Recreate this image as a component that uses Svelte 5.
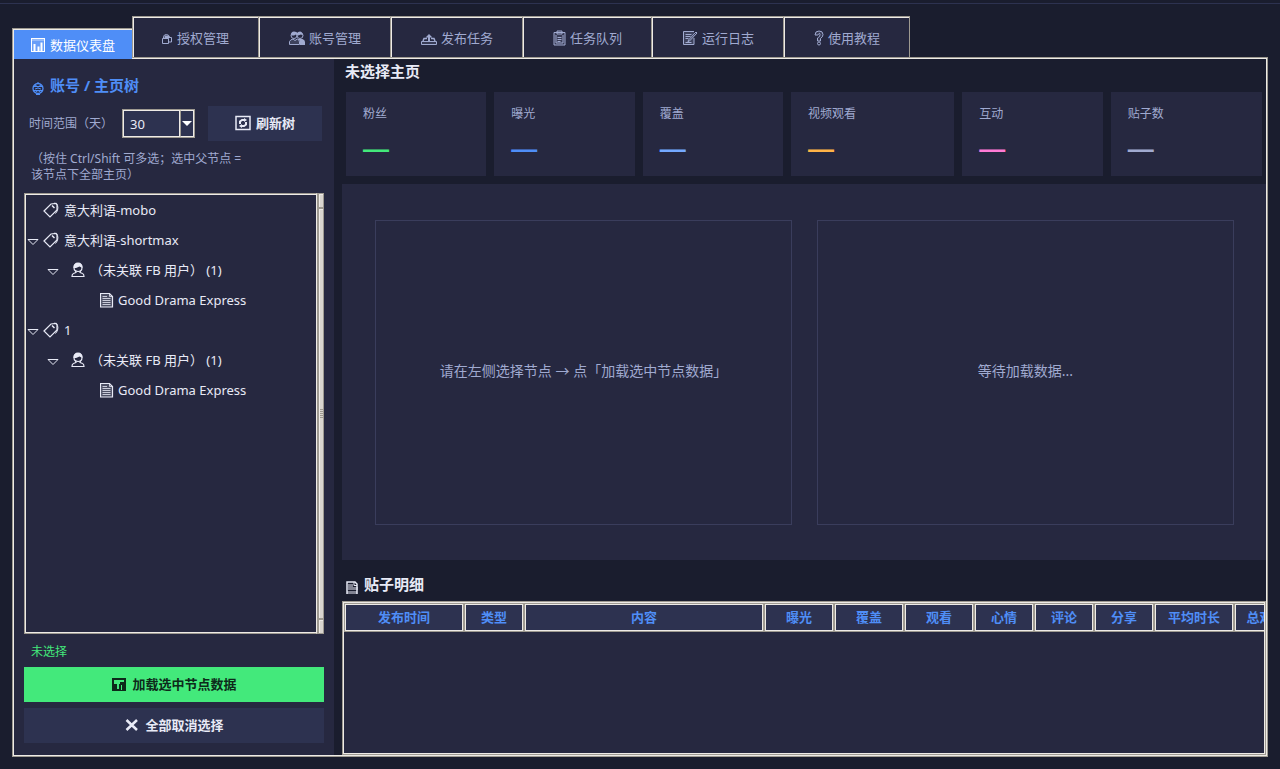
<script>
	const tabs = [
		{ label: "数据仪表盘", icon: "chart", width: 16 },
		{ label: "授权管理", icon: "lock", width: 11 },
		{ label: "账号管理", icon: "users", width: 16 },
		{ label: "发布任务", icon: "outbox", width: 16 },
		{ label: "任务队列", icon: "clipboard", width: 13 },
		{ label: "运行日志", icon: "memo", width: 16 },
		{ label: "使用教程", icon: "question", width: 10 },
	];

	const stats = [
		{ label: "粉丝", color: "green" },
		{ label: "曝光", color: "blue" },
		{ label: "覆盖", color: "sky" },
		{ label: "视频观看", color: "orange", size: "large" },
		{ label: "互动", color: "pink" },
		{ label: "贴子数", color: "grey", size: "medium" },
	];

	const nodes = [
		{ kind: "tag", label: "意大利语-mobo", leaf: true },
		{ kind: "tag", label: "意大利语-shortmax" },
		{ kind: "user", label: "（未关联 FB 用户） (1)" },
		{ kind: "page", label: "Good Drama Express", leaf: true },
		{ kind: "tag", label: "1" },
		{ kind: "user", label: "（未关联 FB 用户） (1)" },
		{ kind: "page", label: "Good Drama Express", leaf: true },
	];

	const columns = [
		{ label: "发布时间", width: 120 },
		{ label: "类型", width: 60 },
		{ label: "内容", width: 240 },
		{ label: "曝光", width: 70 },
		{ label: "覆盖", width: 70 },
		{ label: "观看", width: 70 },
		{ label: "心情", width: 60 },
		{ label: "评论", width: 60 },
		{ label: "分享", width: 60 },
		{ label: "平均时长", width: 80 },
		{ label: "总观看时长", width: 90 },
	];

	let activeTab = $state(0);
	let days = $state("30");
</script>

{#snippet icon(name, width = 16)}
	<svg class="icon" {width} height="16" viewBox="0 0 {width} 16" fill="none" stroke="currentColor" aria-hidden="true">
		{#if name === "chart"}
			<rect x="1.500" y="1.500" width="13" height="13" fill="currentColor" fill-opacity=".15" />
			<path d="M1 3h14" opacity=".6" />
			<path d="M4.500 7v7M8.500 9.500v4.500M11.500 5.500v8.500" stroke-width="2" />
		{:else if name === "chart-solid"}
			<path d="M1 2h14v13H1z" fill="currentColor" stroke="none" />
			<path class="cut" d="M3 4h10v2H9v2H8v5H6V8H3zM10 9h1v5h-1z" stroke="none" />
		{:else if name === "lock"}
			<path d="M.5 8.500h6v5h-6zM7 7.500h2.500v4.500H7" />
			<path d="M1.500 8V6.500Q2 4.500 4.500 4.500T7.500 7.500" />
			<path d="M3 6h4v2H3z" fill="currentColor" />
		{:else if name === "users"}
			<circle cx="5" cy="5.500" r="3" />
			<circle cx="11" cy="5.500" r="3" />
			<path d="M2 5.500q0-4 3-4t3 1.500q1-1.500 3-1.500t3 4l-2-1-3 1-2-1-2 1z" fill="currentColor" stroke="none" />
			<path d="M.5 14.500v-3q1-2 3.500-2.500l2 1.500L8.500 9q2 1 2 3v2.500z" fill="currentColor" fill-opacity=".2" />
			<path d="M8.500 9h5q2.500 1 2.500 3v3h-5v-4z" fill="currentColor" stroke="none" />
		{:else if name === "outbox"}
			<path d="M.5 11.500h15v3H.5z" fill="currentColor" fill-opacity=".15" />
			<path d="M2 11l1-2.500h3M14 11l-1-2.500h-3" stroke-width="1.500" />
			<path d="M7 12V7.500H4.500L8 4l3.500 3.500H9V12z" fill="currentColor" stroke="none" />
		{:else if name === "clipboard"}
			<path d="M1 2.500h11v12.500H1zM4 1h5v3H4z" fill="currentColor" fill-opacity=".15" />
			<path d="M3 5v8h7V5M4.500 7.500h4M4.500 9.500h4M4.500 11.500h3" />
		{:else if name === "memo"}
			<path d="M12 8v6.500H1.500v-13H12" fill="currentColor" fill-opacity=".2" />
			<path d="M3.500 4.500h6M3.500 6.500h5M3.500 8.500h3M3.500 12.500h6" />
			<path d="M15 3 7.500 11 6 12l.5-2L14 2z" />
		{:else if name === "question"}
			<path d="M1 5q0-4 4-4t4 3.500Q9 7 6.500 8.500V11h-3V8Q6.500 6.500 6 4.500T5 3.500 4 5z" fill="currentColor" fill-opacity=".15" />
			<circle cx="5" cy="13.500" r="1.500" />
		{:else if name === "globe"}
			<circle cx="7" cy="8.500" r="5" stroke-width="1.300" />
			<path d="M2 6.500h9M2.500 10.500h9M4 5l3 2 3-2M4 9l3-1 3 1M4.500 12 7 10.500 9.500 12" />
			<path d="M5 14.500h4M6 3h2" />
		{:else if name === "refresh"}
			<rect x="1" y="1.500" width="14" height="13" stroke-width="1.500" />
			<path d="M5 9V6.500L7 5h2M11 7v2.500L9 11H7" stroke-width="2" />
			<path d="M9 3v4l3-2zM7 13V9l-3 2z" fill="currentColor" stroke="none" />
		{:else if name === "tag"}
			<path d="M1 9 8 2l5-.5 1 1v5.500L7 15z" stroke-width="1.200" />
			<path d="M11.500 1q4.500 1 3 7.500l-2 3" />
			<path d="M9 3.500 11.500 6" stroke-width="1.500" />
		{:else if name === "user"}
			<path d="M3 5.500Q3 1.500 7 1.500t4 4Q11 9.500 7 9.500T3 5.500z" stroke-width="1.200" />
			<path d="M2.500 6q0-5.500 4.500-5.500t4.500 5.500L8.500 4.500 5 6z" fill="currentColor" stroke="none" />
			<path d="M4.500 9 5 10.500 2.500 11.500Q1 12 1 14.500h12q0-2.500-1.500-3L9 10.500 9.500 9" stroke-width="1.200" />
		{:else if name === "page"}
			<path d="M.5 1.500h9l3 3v10.500H.5z" fill="currentColor" fill-opacity=".2" stroke-width="1.200" />
			<path d="M9.500 1.500v3h3M2.500 4.500H7M2.500 6.500h8M2.500 8.500h8M2.500 10.500h8M2.500 12.500h8" opacity=".8" />
		{:else if name === "file"}
			<path d="M2 15V3h8l2 2v10" stroke-width="1.500" />
			<path d="M9 3v3.500h3" />
			<path d="M3 5h5v3h5v3H3zM2 12h10v3H2z" fill="currentColor" stroke="none" opacity=".5" />
		{:else if name === "close"}
			<path d="m2.500 3 10.500 10M13 3 2.500 13" stroke-width="2.500" />
		{/if}
	</svg>
{/snippet}

<div class="app">
	<div class="tabs" role="tablist">
		{#each tabs as tab, i}
			<button
				class="tab"
				class:active={i === activeTab}
				role="tab"
				aria-selected={i === activeTab}
				onclick={() => (activeTab = i)}
			>
				{@render icon(tab.icon, tab.width)}
				<span>{tab.label}</span>
			</button>
		{/each}
	</div>

	<main class="pane">
		<aside class="sidebar">
			<h2 class="side-title">{@render icon("globe", 14)}账号 / 主页树</h2>

			<div class="filter">
				<label for="days">时间范围（天）</label>
				<div class="combo">
					<select id="days" bind:value={days}>
						<option>7</option>
						<option>14</option>
						<option>30</option>
						<option>90</option>
					</select>
					<span class="arrow"></span>
				</div>
				<button class="btn refresh">{@render icon("refresh")}刷新树</button>
			</div>

			<p class="hint">（按住 Ctrl/Shift 可多选；选中父节点 =<br />该节点下全部主页）</p>

			<div class="tree-box">
				<ul class="tree">
					{#each nodes as node}
						<li class={node.kind}>
							<svg class="toggle" width="12" height="8" viewBox="0 0 12 8" fill="none" stroke="currentColor" aria-hidden="true">
								{#if !node.leaf}
									<path d="M1 1.500h10L6 6.500z" />
								{/if}
							</svg>
							{@render icon(node.kind, node.kind === "tag" ? 16 : 14)}
							<span>{node.label}</span>
						</li>
					{/each}
				</ul>
				<div class="scrollbar">
					<span class="cap"></span>
					<span class="thumb"><i></i></span>
					<span class="cap"></span>
				</div>
			</div>

			<p class="status">未选择</p>
			<button class="btn primary">{@render icon("chart-solid")}加载选中节点数据</button>
			<button class="btn">{@render icon("close")}全部取消选择</button>
		</aside>

		<section class="content">
			<h1>未选择主页</h1>

			<div class="stats">
				{#each stats as stat}
					<div class="card {stat.size ?? ''}">
						<span class="name">{stat.label}</span>
						<span class="value {stat.color}">—</span>
					</div>
				{/each}
			</div>

			<div class="charts">
				<div class="chart">请在左侧选择节点 → 点「加载选中节点数据」</div>
				<div class="chart">等待加载数据...</div>
			</div>

			<h2 class="posts-title">{@render icon("file", 14)}贴子明细</h2>

			<div class="table-box">
				<table>
					<colgroup>
						{#each columns as column}
							<col style="width: {column.width}px" />
						{/each}
					</colgroup>
					<thead>
						<tr>
							{#each columns as column}
								<th scope="col">{column.label}</th>
							{/each}
						</tr>
					</thead>
					<tbody></tbody>
				</table>
			</div>
		</section>
	</main>
</div>

<style>
	:global(body) {
		background: #1a1d2e;
	}

	.app {
		--dark: #1a1d2e;
		--panel: #262840;
		--raised: #2d3250;
		--muted: #a0aad0;
		--text: #e8eaf6;
		--blue: #4f8ef7;
		--green: #43e97b;
		--edge: #9e9a91;
		--light: #eeebe7;
		box-sizing: border-box;
		display: flex;
		flex-direction: column;
		min-height: 100vh;
		padding: 12px;
		padding-top: 16px;
		background: linear-gradient(var(--raised), var(--raised)) 0 3px / 100% 1px no-repeat var(--dark);
		color: var(--text);
		font-family: "Noto Sans", "Noto Sans CJK SC", sans-serif;
		font-size: 13px;
		line-height: 20px;
	}

	.app *,
	.app *::after {
		box-sizing: border-box;
	}

	h1,
	h2,
	p,
	ul {
		margin: 0;
		padding: 0;
	}

	button,
	select {
		font: inherit;
		color: inherit;
		border: 0;
		border-radius: 0;
	}

	.icon {
		flex: none;
	}

	.tabs {
		display: flex;
		align-items: flex-end;
		position: relative;
	}

	.tab {
		display: flex;
		align-items: center;
		gap: 4px;
		height: 41px;
		padding: 2px 29px 0;
		border: solid var(--edge);
		border-width: 1px 1px 0;
		box-shadow: inset 1px 1px var(--light);
		background: var(--panel);
		color: var(--muted);
		white-space: nowrap;
	}

	.tab.active {
		height: 31px;
		margin-bottom: -2px;
		padding: 2px 17px 0;
		border-right: 0;
		background: var(--blue);
		color: #fff;
	}

	.tab + .tab + .tab {
		border-left-width: 0;
		padding-left: 30px;
	}

	.pane {
		flex: 1;
		display: flex;
		min-width: 0;
		border: 1px solid var(--edge);
		outline: 1px solid var(--light);
		outline-offset: -2px;
		padding: 1px;
	}

	.sidebar {
		flex: none;
		display: flex;
		flex-direction: column;
		width: 320px;
		padding: 15px 10px 12px;
		background: var(--panel);
	}

	.side-title {
		display: flex;
		align-items: center;
		gap: 5px;
		padding-left: 7px;
		color: var(--blue);
		font-size: 15px;
		line-height: 22px;
	}

	.side-title .icon,
	.posts-title .icon {
		margin-top: 5px;
	}

	.filter {
		display: flex;
		align-items: center;
		margin: 10px 2px 0 5px;
		color: var(--muted);
		font-size: 12px;
	}

	.combo {
		position: relative;
		width: 73px;
		margin: 0 13px 0 auto;
	}

	.combo select {
		display: block;
		width: 100%;
		height: 29px;
		padding: 0 20px 0 7px;
		appearance: none;
		background: var(--raised);
		border: 1px solid var(--edge);
		box-shadow: inset 0 0 0 1px var(--light);
		color: var(--text);
		font-size: 13px;
	}

	.arrow {
		position: absolute;
		top: 1px;
		right: 1px;
		bottom: 1px;
		width: 14px;
		border: 1px solid var(--light);
		border-left-color: var(--edge);
		box-shadow: -1px 0 var(--light);
		pointer-events: none;
	}

	.arrow::after {
		content: "";
		position: absolute;
		top: 10px;
		left: 1px;
		border: 5px solid transparent;
		border-top-color: #fff;
		border-bottom: 0;
	}

	.btn {
		display: flex;
		align-items: center;
		justify-content: center;
		gap: 5px;
		flex: none;
		height: 35px;
		padding: 0 0 1px;
		background: var(--raised);
		color: var(--text);
		font-size: 13px;
		font-weight: bold;
	}

	.btn.refresh {
		width: 114px;
	}

	.btn.primary {
		margin-bottom: 6px;
		background: var(--green);
		color: #0d2a1a;
	}

	.cut {
		fill: var(--green);
	}

	.hint {
		margin: 10px 0 10px 7px;
		color: var(--muted);
		font-size: 12px;
		line-height: 16px;
	}

	.tree-box {
		flex: 1;
		display: flex;
	}

	.tree {
		flex: 1;
		padding: 1px 3px;
		border: 1px solid var(--edge);
		border-right-color: var(--light);
		box-shadow: inset 1px 1px var(--light), inset 0 -1px var(--light);
		list-style: none;
	}

	.tree li {
		display: flex;
		align-items: center;
		height: 30px;
		white-space: nowrap;
	}

	.toggle {
		flex: none;
		margin: 3px 4px 0 -1px;
	}

	.tree span {
		margin-left: 5px;
	}

	.tree .user {
		padding-left: 20px;
	}

	.tree .user .icon {
		margin-left: 8px;
	}

	.tree .page {
		padding-left: 57px;
	}

	.tree .page span {
		margin-left: 4px;
	}

	.scrollbar {
		display: flex;
		flex-direction: column;
		width: 7px;
		border: 1px solid var(--edge);
		border-left-width: 2px;
		background: #d9d5cf;
	}

	.cap {
		height: 13px;
		box-shadow: inset 1px 1px var(--light);
	}

	.thumb {
		flex: 1;
		display: flex;
		align-items: center;
		border: solid var(--edge);
		border-width: 2px 0;
		box-shadow: inset 1px 1px var(--light);
	}

	.thumb i {
		width: 3px;
		height: 9px;
		margin-left: 1px;
		background: repeating-linear-gradient(var(--edge) 0 1px, transparent 1px 2px);
	}

	.status {
		padding: 8px 7px 5px;
		color: var(--green);
		font-size: 12px;
	}

	.content {
		flex: 1;
		display: flex;
		flex-direction: column;
		min-width: 0;
		margin-left: 8px;
	}

	h1 {
		padding: 1px 3px 10px;
		font-size: 15px;
		line-height: 22px;
	}

	.stats {
		display: flex;
		gap: 8px;
		padding: 0 4px;
	}

	/* the grow shares leave out the 34px of side padding */
	.card {
		flex: 106 1 0;
		display: flex;
		flex-direction: column;
		height: 84px;
		padding: 12px 17px;
		background: var(--panel);
	}

	.card.medium {
		flex-grow: 117;
	}

	.card.large {
		flex-grow: 129;
	}

	.name {
		color: var(--muted);
		font-size: 12px;
	}

	.value {
		margin-top: 7px;
		font: bold 26px/36px "Liberation Sans", sans-serif;
	}

	.value.green {
		color: var(--green);
	}

	.value.blue {
		color: var(--blue);
	}

	.value.sky {
		color: #74a9ff;
	}

	.value.orange {
		color: #ffb347;
	}

	.value.pink {
		color: #ff7bd5;
	}

	.value.grey {
		color: var(--muted);
	}

	.charts {
		display: flex;
		gap: 25px;
		height: 376px;
		margin-top: 8px;
		padding: 36px 32px 35px 33px;
		background: var(--panel);
	}

	.chart {
		flex: 1;
		display: flex;
		align-items: center;
		justify-content: center;
		padding-bottom: 4px;
		border: 1px solid #3a3d5c;
		color: var(--muted);
		font-size: 14px;
	}

	.posts-title {
		display: flex;
		align-items: center;
		gap: 5px;
		padding: 13px 3px 6px;
		font-size: 15px;
		line-height: 22px;
	}

	.table-box {
		flex: 1;
		padding: 1px;
		overflow: hidden;
		background: var(--panel);
		border: 1px solid var(--edge);
		outline: 1px solid var(--light);
		outline-offset: -2px;
	}

	table {
		width: 980px;
		table-layout: fixed;
		border-collapse: separate;
		border-spacing: 0;
	}

	th {
		height: 29px;
		padding: 0 0 2px;
		background: var(--raised);
		border: 1px solid var(--edge);
		box-shadow: inset 0 0 0 1px var(--light);
		color: var(--blue);
		font-size: 13px;
	}
</style>
